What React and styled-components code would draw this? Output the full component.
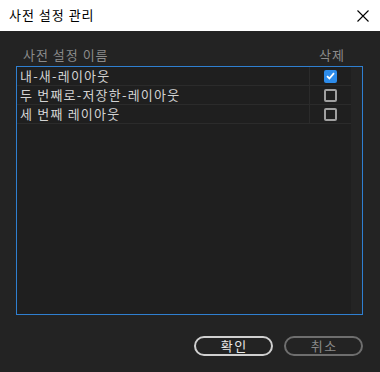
import React from "react";
import styled, { createGlobalStyle } from "styled-components";

const Global = createGlobalStyle`
  html, body { margin: 0; padding: 0; background: #232323; }
  body { width: 380px; height: 372px; overflow: hidden; font-family: "Noto Sans CJK KR", "Noto Sans", sans-serif; }
`;

const Window = styled.div`
  width: 380px;
  height: 372px;
  display: flex;
  flex-direction: column;
  background: #232323;
`;

const TitleBar = styled.div`
  height: 31px;
  flex: none;
  background: #ffffff;
  display: flex;
  align-items: center;
  justify-content: space-between;
  padding: 0 11px 0 9px;
  box-sizing: border-box;
`;

const Title = styled.span`
  font-size: 13px;
  line-height: 16px;
  letter-spacing: 1px;
  color: #000;
  margin-top: -1px;
`;

const CloseButton = styled.button`
  border: none;
  background: none;
  padding: 0;
  width: 12px;
  height: 12px;
  display: flex;
  align-items: center;
  justify-content: center;
`;

const Body = styled.div`
  flex: 1;
  display: flex;
  flex-direction: column;
  padding: 0 17px 0 16px;
`;

const Header = styled.div`
  height: 35px;
  display: grid;
  grid-template-columns: 1fr 41px 12px;
  align-items: end;
  padding-left: 7px;
  box-sizing: border-box;
`;

const HeaderCell = styled.span`
  font-size: 13px;
  line-height: 16px;
  letter-spacing: 1px;
  color: #8b8b8b;
  padding-bottom: 3px;
  text-align: ${(p) => (p.$center ? "center" : "left")};
  ${(p) => (p.$center ? "padding-left: 3px;" : "")}
`;

const ListBox = styled.div`
  height: 249px;
  box-sizing: border-box;
  border: 1px solid #2f7fd0;
  background: #1f1f1f;
  display: flex;
`;

const Table = styled.div`
  flex: 1;
  display: flex;
  flex-direction: column;
`;

const ScrollTrack = styled.div`
  width: 11px;
  background: #242424;
`;

const Row = styled.div`
  height: 19px;
  display: grid;
  grid-template-columns: 1fr 41px;
  border-bottom: 1px solid #2b2b2b;
  box-sizing: border-box;
`;

const NameCell = styled.div`
  font-size: 13px;
  line-height: 18px;
  letter-spacing: 1.2px;
  color: #d2d2d2;
  padding-left: 3px;
  border-right: 1px solid #2b2b2b;
  white-space: nowrap;
`;

const CheckCell = styled.div`
  display: flex;
  align-items: center;
  justify-content: center;
`;

const Box = styled.div`
  width: 13px;
  height: 13px;
  box-sizing: border-box;
  border-radius: 2px;
  display: flex;
  align-items: center;
  justify-content: center;
  background: ${(p) => (p.$checked ? "#2d8ceb" : "#1f1f1f")};
  border: ${(p) => (p.$checked ? "none" : "2px solid #a0a0a0")};
`;

const Footer = styled.div`
  display: flex;
  justify-content: flex-end;
  gap: 11px;
  padding-top: 21px;
`;

const Button = styled.button`
  width: 79px;
  height: 20px;
  box-sizing: border-box;
  border-radius: 10px;
  background: #232323;
  border: 2px solid ${(p) => (p.$primary ? "#cfcfcf" : "#6e6e6e")};
  color: ${(p) => (p.$primary ? "#e8e8e8" : "#8a8a8a")};
  font-family: "Noto Sans CJK KR", "Noto Sans", sans-serif;
  font-size: 13px;
  line-height: 14px;
  letter-spacing: 1.5px;
  padding: 0 0 0 1.5px;
`;

const rows = [
  { name: "내-새-레이아웃", checked: true },
  { name: "두 번째로-저장한-레이아웃", checked: false },
  { name: "세 번째 레이아웃", checked: false },
];

export default function App() {
  return (
    <>
      <Global />
      <Window>
        <TitleBar>
          <Title>사전 설정 관리</Title>
          <CloseButton aria-label="닫기">
            <svg width="12" height="12" viewBox="0 0 12 12">
              <path d="M0.5 0.5 L11.5 11.5 M11.5 0.5 L0.5 11.5" stroke="#000" strokeWidth="1.1" />
            </svg>
          </CloseButton>
        </TitleBar>
        <Body>
          <Header>
            <HeaderCell>사전 설정 이름</HeaderCell>
            <HeaderCell $center>삭제</HeaderCell>
          </Header>
          <ListBox>
            <Table>
              {rows.map((r) => (
                <Row key={r.name}>
                  <NameCell>{r.name}</NameCell>
                  <CheckCell>
                    <Box $checked={r.checked}>
                      {r.checked && (
                        <svg width="9" height="8" viewBox="0 0 9 8">
                          <path d="M1 4.2 L3.4 6.5 L8 1.2" stroke="#fff" strokeWidth="1.8" fill="none" />
                        </svg>
                      )}
                    </Box>
                  </CheckCell>
                </Row>
              ))}
            </Table>
            <ScrollTrack />
          </ListBox>
          <Footer>
            <Button $primary>확인</Button>
            <Button>취소</Button>
          </Footer>
        </Body>
      </Window>
    </>
  );
}
